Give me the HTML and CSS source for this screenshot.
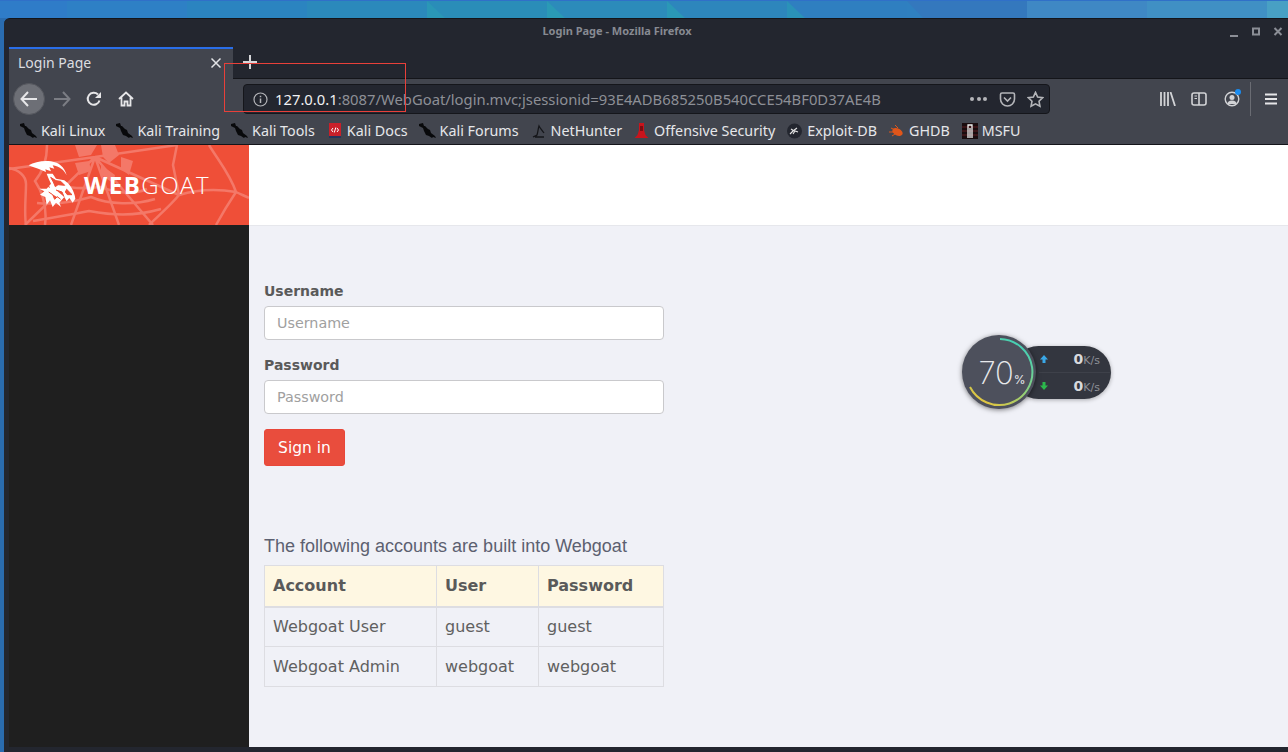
FILE: index.html
```html
<!DOCTYPE html>
<html lang="en">
<head>
    <meta charset="UTF-8">
    <title>Login Page</title>
    <link rel="stylesheet" href="styles.css">
</head>
<body>
    <svg class="wallpaper" viewBox="0 0 1288 18" preserveAspectRatio="none">
        <rect x="0" width="67" height="18" fill="#2f7cc8"/>
        <rect x="67" width="120" height="18" fill="#2e80c5"/>
        <rect x="187" width="120" height="18" fill="#2b84c0"/>
        <rect x="307" width="120" height="18" fill="#2b89bb"/>
        <rect x="427" width="120" height="18" fill="#2a8db8"/>
        <rect x="547" width="120" height="18" fill="#2c8bba"/>
        <rect x="667" width="120" height="18" fill="#2d86bc"/>
        <rect x="787" width="120" height="18" fill="#2f7fc0"/>
        <rect x="907" width="120" height="18" fill="#3478bd"/>
        <rect x="1027" width="120" height="18" fill="#3f88c4"/>
        <rect x="1147" width="120" height="18" fill="#4090c4"/>
        <rect x="1267" width="21" height="18" fill="#48a0c4"/>
        <polygon points="427,1 427,18 445,18" fill="#2a97b6"/>
        <polygon points="547,1 547,18 565,18" fill="#2a9ab5"/>
        <polygon points="667,1 667,18 685,18" fill="#2a98b6"/>
        <polygon points="787,1 787,18 805,18" fill="#2a92b8"/>
        <polygon points="907,1 907,18 923,18" fill="#2f80c0"/>
        <rect width="1288" height="1" fill="#3070c8"/>
    </svg>

    <div class="window">
        <div class="titlebar">
            <span class="title">Login Page - Mozilla Firefox</span>
            <div class="win-controls">
                <svg width="10" height="10" viewBox="0 0 10 10"><path d="M1 9h8" stroke="#8b8e96" stroke-width="2"/></svg>
                <svg width="10" height="10" viewBox="0 0 10 10"><rect x="2" y="1.500" width="6" height="6" fill="none" stroke="#8b8e96" stroke-width="2"/></svg>
                <svg width="10" height="10" viewBox="0 0 10 10"><path d="M1.500 1l7 7M8.500 1l-7 7" stroke="#8b8e96" stroke-width="2"/></svg>
            </div>
        </div>

        <div class="tabstrip">
            <div class="tab">
                <span class="tab-label">Login Page</span>
                <svg class="tab-close" width="12" height="12" viewBox="0 0 12 12"><path d="M1.500 1.500l9 9M10.500 1.500l-9 9" stroke="#e2e3e6" stroke-width="1.500"/></svg>
            </div>
            <svg class="new-tab" width="14" height="14" viewBox="0 0 14 14"><path d="M7 0v14M0 7h14" stroke="#d6d7da" stroke-width="2"/></svg>
        </div>

        <div class="toolbar">
            <div class="back-btn">
                <svg width="18" height="16" viewBox="0 0 18 16"><path d="M8 1L1.500 8 8 15M2 8h15" fill="none" stroke="#e6e6e8" stroke-width="2"/></svg>
            </div>
            <svg class="tool-icon fwd" width="18" height="16" viewBox="0 0 18 16"><path d="M10 1l6.500 7L10 15M16 8H1" fill="none" stroke="#7b7d84" stroke-width="2"/></svg>
            <svg class="tool-icon reload" width="16" height="16" viewBox="0 0 16 16"><path d="M13.500 9.500A6 6 0 1 1 12 3.500" fill="none" stroke="#e6e6e8" stroke-width="2"/><path d="M15 1v6H9z" fill="#e6e6e8"/></svg>
            <svg class="tool-icon home" width="16" height="16" viewBox="0 0 16 16"><path d="M1 8l7-6.500L15 8M3.500 6.500V14.500h3v-4h3v4h3V6.500" fill="none" stroke="#e6e6e8" stroke-width="1.800"/></svg>

            <div class="urlbar">
                <svg class="info-icon" width="15" height="15" viewBox="0 0 15 15"><circle cx="7.500" cy="7.500" r="6.500" fill="none" stroke="#b4b5b9" stroke-width="1.200"/><path d="M7.500 6.500v4.500M7.500 3.700v1.500" stroke="#b4b5b9" stroke-width="1.500"/></svg>
                <span class="url"><span class="url-host">127.0.0.1</span>:8087/WebGoat/login.mvc;jsessionid=93E4ADB685250B540CCE54BF0D37AE4B</span>
                <span class="url-dots"><i></i><i></i><i></i></span>
                <svg class="pocket" width="17" height="15" viewBox="0 0 16 15"><path d="M1 2.500a1.500 1.500 0 0 1 1.500-1.500h11a1.500 1.500 0 0 1 1.500 1.500V7a7 7 0 0 1-14 0zM4.500 5.500L8 9l3.500-3.500" fill="none" stroke="#b4b5b9" stroke-width="1.600"/></svg>
                <svg class="star" width="17" height="17" viewBox="0 0 16 16"><path d="M8 1.300l2 4.400 4.800.6-3.500 3.300.9 4.800L8 12.100l-4.200 2.300.9-4.800L1.200 6.300 6 5.700z" fill="none" stroke="#b4b5b9" stroke-width="1.500"/></svg>
            </div>

            <div class="tool-right">
                <svg width="16" height="14" viewBox="0 0 16 14"><path d="M1 0v14M4.500 0v14M8 0v14M10.500 0l4.500 14" fill="none" stroke="#d2d3d6" stroke-width="1.800"/></svg>
                <svg width="16" height="14" viewBox="0 0 16 14"><rect x="1" y="1" width="14" height="12" rx="2" fill="none" stroke="#d2d3d6" stroke-width="1.600"/><path d="M8 1v12" stroke="#d2d3d6" stroke-width="1.600"/><path d="M3.500 4h2.500M3.500 6.500h2.500" stroke="#d2d3d6"/></svg>
                <div class="account">
                    <svg width="16" height="16" viewBox="0 0 16 16"><circle cx="8" cy="8" r="6.800" fill="none" stroke="#d2d3d6" stroke-width="1.400"/><circle cx="8" cy="6.500" r="2.500" fill="#d2d3d6"/><path d="M3.500 13a4.500 3.500 0 0 1 9 0" fill="#d2d3d6"/></svg>
                    <span class="account-dot"></span>
                </div>
                <span class="tool-sep"></span>
                <svg class="menu-icon" width="14" height="12" viewBox="0 0 14 12"><path d="M1 1.500h12M1 6h12M1 10.500h12" stroke="#e6e6e8" stroke-width="2"/></svg>
            </div>
        </div>

        <div class="bookmarks">
            <a class="bm">
                <svg width="16" height="16" viewBox="0 0 16 16"><path class="kali" d="M0 1L4 0l1 3 1 0 3 3 2 1 1 3 4 3 1 2-3-1-1 1-3-2-3-1-2-4-1-3-4-2z"/></svg>
                Kali Linux
            </a>
            <a class="bm">
                <svg width="16" height="16" viewBox="0 0 16 16"><path class="kali" d="M0 1L4 0l1 3 1 0 3 3 2 1 1 3 4 3 1 2-3-1-1 1-3-2-3-1-2-4-1-3-4-2z"/></svg>
                Kali Training
            </a>
            <a class="bm">
                <svg width="16" height="16" viewBox="0 0 16 16"><path class="kali" d="M0 1L4 0l1 3 1 0 3 3 2 1 1 3 4 3 1 2-3-1-1 1-3-2-3-1-2-4-1-3-4-2z"/></svg>
                Kali Tools
            </a>
            <a class="bm">
                <svg width="16" height="16" viewBox="0 0 16 16"><rect x="3" y="0" width="12" height="15" fill="#c8202a"/><rect x="3" y="13" width="12" height="2" fill="#26345c"/><path d="M7 5L5.500 7 7 9M11 5l1.500 2L11 9M9.800 4.500l-1.500 5" fill="none" stroke="#fff"/></svg>
                Kali Docs
            </a>
            <a class="bm">
                <svg width="16" height="16" viewBox="0 0 16 16"><path class="kali" d="M0 1L4 0l1 3 1 0 3 3 2 1 1 3 4 3 1 2-3-1-1 1-3-2-3-1-2-4-1-3-4-2z"/></svg>
                Kali Forums
            </a>
            <a class="bm">
                <svg width="16" height="16" viewBox="0 0 16 16"><path d="M3 14c2-1 3-1 4-2 1-3 1-6 2-9 1 2 3 4 5 7M5 14h9" fill="none" stroke="#15161a" stroke-width="1.300"/></svg>
                NetHunter
            </a>
            <a class="bm">
                <svg width="16" height="16" viewBox="0 0 16 16"><path d="M6 0h5v7l1.500 5 3 3h-14l3-3L6 7z" fill="#c8141c"/><rect x="7" y="3" width="3" height="5" fill="#7c0c10"/></svg>
                Offensive Security
            </a>
            <a class="bm">
                <svg width="16" height="16" viewBox="0 0 16 16"><circle cx="8.500" cy="8" r="7.500" fill="#23262f"/><path d="M4 11l3-3 4-3M5 6l3 2M7 11l2-3 3 1" fill="none" stroke="#e4e4e4" stroke-width="1.100"/></svg>
                Exploit-DB
            </a>
            <a class="bm">
                <svg width="16" height="16" viewBox="0 0 16 16"><ellipse cx="9.500" cy="9" rx="5.500" ry="3.500" fill="#e0561a" transform="rotate(25 9.500 9)"/><path d="M1 9h5M3 5l4 2M4 13l3-2M7 2l3 3" stroke="#e0561a"/></svg>
                GHDB
            </a>
            <a class="bm">
                <svg width="16" height="16" viewBox="0 0 16 16"><rect x="1" width="16" height="16" fill="#1a0c0e"/><path d="M1 4h16M1 8h16M1 12h16" stroke="#5c1c20"/><path d="M7 15V2h4v13M9 5v10" fill="none" stroke="#f2f2f2" stroke-width="1.300"/></svg>
                MSFU
            </a>
        </div>

        <div class="page">
            <aside class="sidebar">
                <div class="brand">
                    <svg class="web-bg" width="240" height="80" viewBox="0 0 240 80">
                        <g fill="none" stroke="#f47868" stroke-width="2.500">
                            <path d="M86 12L0 24M86 12L16 80M86 12L62 80M86 12l24 68M86 12l58 68M86 12l84 38M86 12L168 0"/>
                            <path d="M170 50l-6-30 4-20M170 50c-8 10-22 22-30 30"/>
                            <path d="M170 50c20-6 40-6 57-3M227 47c-6-18-18-32-27-47M227 47c4 2 9 4 13 6M227 47c-8 12-14 22-20 33"/>
                            <path d="M0 23c10 2 17 8 17 16 0 12-2 28 0 41"/>
                            <path d="M38 0c0 12-2 24-12 36 8 12 12 28 10 44"/>
                            <path d="M48 40c16 4 28 4 44 2 14 6 32 8 46 2"/>
                            <path d="M28 58c20 2 40-2 54-6 18 8 44 8 64 2"/>
                            <path d="M24 76c22-4 36-6 56-10 22 4 44 6 72-2"/>
                        </g>
                        <g fill="#f47868">
                            <path d="M66 0h22l-6 10-12 2zM92 0h14l4 10-10 8-6-6zM66 18l14-2 2 10-12 4zM92 20l14 10-2 8-12-8z"/>
                            <path d="M112 12l12 4-4 14-8-6z"/>
                        </g>
                    </svg>
                    <svg class="goat" width="48" height="50" viewBox="56 44 144 150">
                        <path fill="#fff" d="M58 60C75 50 100 45 125 48c25 4 40 17 47 42-7-15-22-28-42-30l5 10-15-4 5 12-17-6 2 8C95 72 75 68 58 60z"/>
                        <path fill="#fff" d="M112 85h18l10 15 25 5c15 10 30 30 33 55l-8 12-10-14-8 10-7-13-15 17 5 13-15-13-10 13-8-20-10 13-4-23-16-7 13-10-15-8h22l13-15-7-15z"/>
                        <path d="M124 96l16 10 14 2 12 12-20-2-8 6-6-14zM172 132l16 16-14 0-6-8zM118 140l12 8 6 14 8-8 10 8M108 120l14 6M140 134l18 6 6 14" fill="#ef4f38" stroke="#ef4f38" stroke-width="3"/>
                    </svg>
                    <span class="brand-name"><b>WEB</b>GOAT</span>
                </div>
            </aside>
            <div class="content">
                <div class="topbar"></div>
                <main class="main">
                    <form class="login">
                        <label class="field-label" for="user">Username</label>
                        <input class="field" id="user" type="text" placeholder="Username">
                        <label class="field-label" for="pass">Password</label>
                        <input class="field" id="pass" type="password" placeholder="Password">
                        <button class="btn-signin" type="button">Sign in</button>
                    </form>
                    <p class="accounts-title">The following accounts are built into Webgoat</p>
                    <table class="accounts">
                        <thead>
                            <tr><th>Account</th><th>User</th><th>Password</th></tr>
                        </thead>
                        <tbody>
                            <tr><td>Webgoat User</td><td>guest</td><td>guest</td></tr>
                            <tr><td>Webgoat Admin</td><td>webgoat</td><td>webgoat</td></tr>
                        </tbody>
                    </table>
                </main>
            </div>
        </div>
    </div>

    <!-- screen capture selection left over the tab strip -->
    <div class="selection"></div>

    <!-- floating net speed widget -->
    <div class="speed-widget">
        <div class="speed-pill">
            <div class="speed-row">
                <svg width="10" height="10" viewBox="0 0 10 10"><path d="M5 1l4 4.500H6.500V9h-3V5.500H1z" fill="#3aa8e8"/></svg>
                <span class="speed-val">0<small>K/s</small></span>
            </div>
            <div class="speed-row">
                <svg width="10" height="10" viewBox="0 0 10 10"><path d="M5 9L1 4.500h2.500V1h3v3.500H9z" fill="#2cb84c"/></svg>
                <span class="speed-val">0<small>K/s</small></span>
            </div>
        </div>
        <div class="speed-dial">
            <svg class="speed-ring" width="74" height="74" viewBox="0 0 74 74">
                <defs>
                    <linearGradient id="ringGrad" x1="0.8" y1="0" x2="0.2" y2="1">
                        <stop offset="0" stop-color="#3cd0bc"/>
                        <stop offset="0.55" stop-color="#8ed07a"/>
                        <stop offset="1" stop-color="#e8c43c"/>
                    </linearGradient>
                </defs>
                <path d="M38 4A33 33 0 1 1 8 52" fill="none" stroke="url(#ringGrad)" stroke-width="2"/>
            </svg>
            <span class="speed-pct">70<small>%</small></span>
        </div>
    </div>
</body>
</html>
```

FILE: styles.css
```css
html, body {
    height: 100%;
}

body {
    margin: 0;
    background-color: #2a6cb0;
    overflow: hidden;
    font-family: 'DejaVu Sans', sans-serif;
}

.wallpaper {
    display: block;
    width: 100%;
    height: 18px;
}

.window {
    display: flex;
    flex-direction: column;
    margin-left: 4px;
    height: 734px;
    padding-left: 5px;
    box-sizing: border-box;
    background-color: #23262f;
    border-top: 1px solid #14151a;
    border-radius: 6px 0 0 0;
}

/* title bar */
.titlebar {
    position: relative;
    height: 28px;
    margin-left: -5px;
    display: flex;
    align-items: center;
    justify-content: center;
    flex-shrink: 0;
}

.title {
    font-family: 'Noto Sans', sans-serif;
    font-size: 11px;
    font-weight: 700;
    color: #878a92;
    padding-bottom: 5px;
    margin-right: 58px;
}

.win-controls {
    position: absolute;
    right: 5px;
    top: 8px;
    display: flex;
    gap: 12px;
}

/* tabs */
.tabstrip {
    display: flex;
    align-items: center;
    height: 32px;
    flex-shrink: 0;
    border-bottom: 1px solid #14151a;
    box-sizing: border-box;
}

.tab {
    display: flex;
    align-items: center;
    justify-content: space-between;
    width: 224px;
    height: 32px;
    box-sizing: border-box;
    padding: 0 11px 2px 9px;
    background-color: #42454e;
    border-top: 2px solid #2a6ee8;
    font-family: 'Noto Sans', sans-serif;
    font-size: 14px;
    color: #dcdde0;
}

.new-tab {
    margin-left: 10px;
    margin-top: -2px;
}

/* toolbar */
.toolbar {
    display: flex;
    align-items: center;
    height: 38px;
    padding-top: 2px;
    box-sizing: border-box;
    flex-shrink: 0;
    background-color: #42454e;
}

.back-btn {
    display: flex;
    align-items: center;
    justify-content: center;
    width: 32px;
    height: 32px;
    margin-left: 4px;
    border-radius: 50%;
    background-color: #6d6f76;
    border: 1px solid #55575e;
    box-sizing: border-box;
}

.tool-icon {
    flex-shrink: 0;
}

.fwd {
    margin-left: 8px;
}

.reload {
    margin-left: 15px;
}

.home {
    margin-left: 16px;
}

.urlbar {
    display: flex;
    align-items: center;
    width: 807px;
    height: 30px;
    margin-left: 109px;
    box-sizing: border-box;
    padding: 0 5px 0 9px;
    background-color: #23262f;
    border: 1px solid #15161b;
    border-radius: 4px;
    font-family: 'Noto Sans', sans-serif;
    font-size: 14.800px;
    color: #8d8f96;
    flex-shrink: 0;
}

.url {
    margin-left: 7px;
    flex: 1;
    white-space: nowrap;
}

.url-host {
    color: #f0f0f2;
}

.url-dots {
    display: flex;
    gap: 2.500px;
    margin-right: 12px;
}

.url-dots i {
    width: 4px;
    height: 4px;
    border-radius: 50%;
    background-color: #b4b5b9;
}

.star {
    margin-left: 11px;
}

.tool-right {
    display: flex;
    align-items: center;
    margin-left: 110px;
    gap: 15px;
}

.account {
    position: relative;
    display: flex;
    margin-left: 2px;
}

.account-dot {
    position: absolute;
    top: -2px;
    right: -1px;
    width: 6px;
    height: 6px;
    border-radius: 50%;
    background-color: #1a8cf0;
}

.tool-sep {
    width: 1px;
    height: 34px;
    margin-left: -5px;
    background-color: #6a6c73;
}

.menu-icon {
    margin-left: -2px;
}

/* bookmarks */
.bookmarks {
    display: flex;
    align-items: center;
    gap: 11px;
    height: 28px;
    padding-left: 11px;
    box-sizing: border-box;
    flex-shrink: 0;
    background-color: #42454e;
    border-bottom: 1px solid #14151a;
    font-family: 'Noto Sans', sans-serif;
    font-size: 14.300px;
    color: #e6e7ea;
}

.bm {
    display: flex;
    align-items: center;
    gap: 5px;
    white-space: nowrap;
}

.bm svg {
    overflow: visible;
    flex-shrink: 0;
}

.kali {
    fill: #08090b;
}

/* page */
.page {
    display: flex;
    height: 602px;
    flex-shrink: 0;
}

.sidebar {
    width: 240px;
    flex-shrink: 0;
    background-color: #1f1f1f;
}

.brand {
    position: relative;
    display: flex;
    align-items: center;
    height: 80px;
    background-color: #ef4f38;
    overflow: hidden;
}

.web-bg {
    position: absolute;
    left: 0;
    top: 0;
}

.goat {
    position: relative;
    margin-left: 19px;
}

.brand-name {
    position: relative;
    margin-left: 8px;
    padding-bottom: 2px;
    font-family: 'Open Sans', sans-serif;
    font-size: 24px;
    font-weight: 300;
    letter-spacing: 1.500px;
    color: #fff;
}

.brand-name b {
    font-weight: 700;
}

.content {
    flex: 1;
    display: flex;
    flex-direction: column;
    background-color: #f0f1f7;
}

.topbar {
    height: 80px;
    background-color: #fff;
    border-bottom: 1px solid #e6e7ec;
}

.main {
    padding: 55px 15px 0;
    color: #606060;
}

.login {
    display: flex;
    flex-direction: column;
    align-items: flex-start;
    width: 400px;
}

.field-label {
    font-size: 14px;
    font-weight: 700;
    line-height: 20px;
    margin-bottom: 5px;
    color: #5a5a5a;
}

.field {
    width: 100%;
    height: 34px;
    box-sizing: border-box;
    padding: 6px 12px;
    margin-bottom: 15px;
    background-color: #fff;
    border: 1px solid #c9c9cc;
    border-radius: 4px;
    font-family: 'DejaVu Sans', sans-serif;
    font-size: 14.300px;
    outline: none;
}

.field::placeholder {
    color: #a0a0a0;
}

.btn-signin {
    height: 37px;
    width: 81px;
    padding: 0;
    background-color: #e94d3d;
    border: 1px solid #e8473a;
    border-radius: 3px;
    font-family: 'DejaVu Sans', sans-serif;
    font-size: 15.500px;
    color: #fff;
}

.accounts-title {
    margin: 70px 0 9px;
    font-family: 'Liberation Sans', sans-serif;
    font-size: 18px;
    line-height: 20px;
    color: #5c6070;
}

.accounts {
    width: 400px;
    border-collapse: collapse;
    font-size: 16px;
    table-layout: fixed;
}

.accounts th, .accounts td {
    border: 1px solid #dddde2;
    padding: 0 8px;
    height: 40px;
    text-align: left;
    box-sizing: border-box;
}

.accounts th {
    background-color: #fef7e2;
    border-bottom-width: 2px;
    height: 41px;
    color: #5a5a5a;
}

.accounts th:nth-child(1) { width: 172px; }
.accounts th:nth-child(2) { width: 102px; }

/* selection rectangle */
.selection {
    position: absolute;
    left: 224px;
    top: 63px;
    width: 182px;
    height: 49px;
    box-sizing: border-box;
    border: 1px solid #e8403a;
}

/* net speed widget */
.speed-widget {
    position: absolute;
    left: 962px;
    top: 335px;
    width: 150px;
    height: 76px;
}

.speed-pill {
    position: absolute;
    left: 50px;
    top: 11px;
    width: 99px;
    height: 53px;
    box-sizing: border-box;
    padding-left: 27px;
    background-color: #33363f;
    border-radius: 27px;
    box-shadow: 0 1px 4px rgba(0,0,0,.3);
    display: flex;
    flex-direction: column;
}

.speed-row {
    flex: 1;
    display: flex;
    align-items: center;
    justify-content: space-between;
    padding-right: 11px;
}

.speed-row + .speed-row {
    border-top: 1px solid #3e414a;
}

.speed-val {
    font-size: 14px;
    font-weight: 700;
    color: #d8d9dc;
}

.speed-val small {
    font-size: 11px;
    font-weight: 400;
    color: #8e9097;
}

.speed-dial {
    position: absolute;
    left: 0;
    top: 0;
    width: 74px;
    height: 74px;
    padding-left: 6px;
    box-sizing: border-box;
    border-radius: 50%;
    background-color: #4d505c;
    box-shadow: 0 1px 5px rgba(0,0,0,.5);
    display: flex;
    align-items: center;
    justify-content: center;
}

.speed-ring {
    position: absolute;
    left: 0;
    top: 0;
}

.speed-pct {
    font-family: 'Inter', sans-serif;
    font-size: 31px;
    font-weight: 200;
    color: #e8e9ec;
}

.speed-pct small {
    font-size: 12px;
    font-weight: 400;
}
```
